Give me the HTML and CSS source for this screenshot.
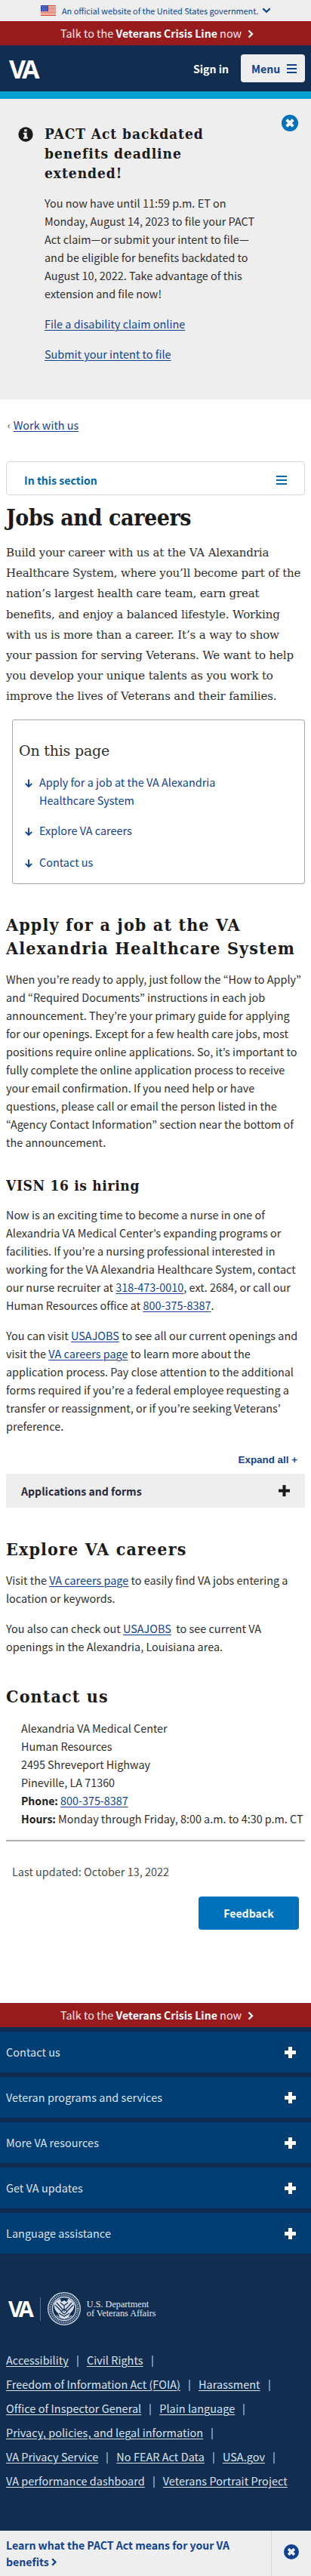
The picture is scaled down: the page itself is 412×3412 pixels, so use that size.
FILE: index.html
```html
<!DOCTYPE html>
<html lang="en">
<head>
<meta charset="utf-8">
<title>Jobs and careers | VA Alexandria Health Care</title>
<link rel="stylesheet" href="styles.css">
</head>
<body>
<div class="gov-banner">
  <svg class="flag" width="20" height="14" viewBox="0 0 20 14"><path fill="#fff" d="M0 0h20v14H0z"/><path stroke="#d9472f" stroke-width="1.1" d="M0 .6h20M0 2.8h20M0 4.9h20M0 7h20M0 9.1h20M0 11.2h20M0 13.4h20"/><path fill="#2a3fb0" d="M0 0h10v8H0z"/><path stroke="#cdd6ff" stroke-width=".8" stroke-dasharray="1 1.2" d="M1 1.6h8M2 3.4h7M1 5.2h8M2 6.8h7"/></svg>
  <span class="gov-text">An official website of the United States government.</span>
  <svg class="gov-chevron" width="12" height="8" viewBox="0 0 12 8"><path fill="none" stroke="#0f4291" stroke-width="2.2" d="M1.4 1.4 6 5.8l4.6-4.4"/></svg>
</div>
<div class="crisis"><span class="crisis-text">Talk to the <b>Veterans Crisis Line</b> now</span><svg width="8" height="12" viewBox="0 0 8 12"><path fill="none" stroke="#fff" stroke-width="2.3" d="m1.5 1.5 4.500 4.500-4.500 4.500"/></svg></div>
<header class="header">
  <span class="va-logo">VA</span>
  <a class="sign-in">Sign in</a>
  <button class="menu">Menu<svg width="13" height="12" viewBox="0 0 13 12"><path stroke="#0f4291" stroke-width="2" d="M0 1h13M0 6h13M0 11h13"/></svg></button>
</header>
<section class="alert">
  <svg class="info" width="20" height="20" viewBox="0 0 20 20"><circle cx="10" cy="10" r="9.700" fill="#1b1b1b"/><path fill="#eee" d="M8.200 3.300h3.400v2.900H8.200zM6.900 7.800h4.700v5.700h1.300v2.300H6.900v-2.300h1.300v-3.400H6.900z"/></svg>
  <div class="alert-body">
    <h2 class="alert-title">PACT Act backdated<br>benefits deadline<br>extended!</h2>
    <p>You now have until 11:59 p.m. ET on<br>Monday, August 14, 2023 to file your PACT<br>Act claim—or submit your intent to file—<br>and be eligible for benefits backdated to<br>August 10, 2022. Take advantage of this<br>extension and file now!</p>
    <p><a class="link">File a disability claim online</a></p>
    <p><a class="link">Submit your intent to file</a></p>
  </div>
  <svg class="close" width="22" height="22" viewBox="0 0 22 22"><circle cx="11" cy="11" r="11" fill="#0071bb"/><path stroke="#fff" stroke-width="4" d="m6.700 6.700 8.600 8.600m0-8.600-8.600 8.600"/></svg>
</section>
<nav class="crumb"><span class="crumb-mark">‹</span><a class="link">Work with us</a></nav>
<main class="main">
  <button class="section-nav">In this section<svg width="14" height="12" viewBox="0 0 14 12"><path stroke="#0068a8" stroke-width="1.800" d="M0 1h14M0 6h14M0 11h14"/></svg></button>
  <h1 class="title">Jobs and careers</h1>
  <p class="intro">Build your career with us at the VA Alexandria<br>Healthcare System, where you’ll become part of the<br>nation’s largest health care team, earn great<br>benefits, and enjoy a balanced lifestyle. Working<br>with us is more than a career. It’s a way to show<br>your passion for serving Veterans. We want to help<br>you develop your unique talents as you work to<br>improve the lives of Veterans and their families.</p>
  <nav class="toc">
    <h2 class="toc-title">On this page</h2>
    <a class="toc-link"><svg width="10" height="12" viewBox="0 0 10 12"><path fill="none" stroke="#0f4291" stroke-width="1.900" d="M5 .5v9.500M.800 5.800 5 10l4.200-4.200"/></svg><span>Apply for a job at the VA Alexandria<br>Healthcare System</span></a>
    <a class="toc-link"><svg width="10" height="12" viewBox="0 0 10 12"><path fill="none" stroke="#0f4291" stroke-width="1.900" d="M5 .5v9.500M.800 5.800 5 10l4.200-4.200"/></svg><span>Explore VA careers</span></a>
    <a class="toc-link"><svg width="10" height="12" viewBox="0 0 10 12"><path fill="none" stroke="#0f4291" stroke-width="1.900" d="M5 .5v9.500M.800 5.800 5 10l4.200-4.200"/></svg><span>Contact us</span></a>
  </nav>
  <h2 class="heading apply">Apply for a job at the VA<br>Alexandria Healthcare System</h2>
  <p>When you’re ready to apply, just follow the “How to Apply”<br>and “Required Documents” instructions in each job<br>announcement. They’re your primary guide for applying<br>for our openings. Except for a few health care jobs, most<br>positions require online applications. So, it’s important to<br>fully complete the online application process to receive<br>your email confirmation. If you need help or have<br>questions, please call or email the person listed in the<br>“Agency Contact Information” section near the bottom of<br>the announcement.</p>
  <h3 class="subheading">VISN 16 is hiring</h3>
  <p>Now is an exciting time to become a nurse in one of<br>Alexandria VA Medical Center’s expanding programs or<br>facilities. If you’re a nursing professional interested in<br>working for the VA Alexandria Healthcare System, contact<br>our nurse recruiter at <a class="link">318-473-0010</a>, ext. 2684, or call our<br>Human Resources office at <a class="link">800-375-8387</a>.</p>
  <p>You can visit <a class="link">USAJOBS</a> to see all our current openings and<br>visit the <a class="link">VA careers page</a> to learn more about the<br>application process. Pay close attention to the additional<br>forms required if you’re a federal employee requesting a<br>transfer or reassignment, or if you’re seeking Veterans’<br>preference.</p>
  <button class="expand">Expand all +</button>
  <button class="accordion">Applications and forms<svg width="15" height="15" viewBox="0 0 15 15"><path stroke="#1b1b1b" stroke-width="4" d="M7.500 0v15M0 7.500h15"/></svg></button>
  <h2 class="heading explore">Explore VA careers</h2>
  <p>Visit the <a class="link">VA careers page</a> to easily find VA jobs entering a<br>location or keywords.</p>
  <p>You also can check out <a class="link">USAJOBS</a>&nbsp; to see current VA<br>openings in the Alexandria, Louisiana area.</p>
  <h2 class="heading contact">Contact us</h2>
  <address class="address">Alexandria VA Medical Center<br>Human Resources<br>2495 Shreveport Highway<br>Pineville, LA 71360<br><b>Phone:</b> <a class="link">800-375-8387</a><br><b>Hours:</b> Monday through Friday, 8:00 a.m. to 4:30 p.m. CT</address>
  <hr class="rule">
  <p class="updated">Last updated: October 13, 2022</p>
  <button class="feedback">Feedback</button>
</main>
<div class="crisis"><span class="crisis-text">Talk to the <b>Veterans Crisis Line</b> now</span><svg width="8" height="12" viewBox="0 0 8 12"><path fill="none" stroke="#fff" stroke-width="2.3" d="m1.5 1.5 4.500 4.500-4.500 4.500"/></svg></div>
<footer class="footer">
  <div class="footer-nav">
    <button>Contact us<i class="plus"></i></button>
    <button>Veteran programs and services<i class="plus"></i></button>
    <button>More VA resources<i class="plus"></i></button>
    <button>Get VA updates<i class="plus"></i></button>
    <button>Language assistance<i class="plus"></i></button>
  </div>
  <div class="brand">
    <span class="va-logo small">VA</span><span class="brand-line"></span>
    <svg class="seal" width="44" height="44" viewBox="0 0 44 44" fill="none" stroke="#d5dde8"><circle cx="22" cy="22" r="21.300" stroke-width="1.300"/><circle cx="22" cy="22" r="18.300" stroke="#8fa0b8" stroke-width="3" stroke-dasharray="1.400 1"/><circle cx="22" cy="22" r="15.500" stroke-width="1.300"/><path fill="#d5dde8" stroke="none" d="M9 15c3-4 6-6 8-6l1 4 4-2 4 2 1-4c2 0 5 2 8 6 1 5-1 10-5 13l-2 5-6 3-6-3-2-5c-4-3-6-8-5-13z"/><path stroke="#112e51" stroke-width="1.200" d="m10 17 8 8m-6-11 8 9m14-6-8 8m6-11-8 9M17 14l5 4 5-4M22 18v8M15 28l7 4 7-4M18 26l4-4 4 4-4 3z"/><path stroke-width="1.200" d="M12 31c4 5 16 5 20 0"/></svg>
    <span class="brand-text">U.S. Department<br>of Veterans Affairs</span>
  </div>
  <div class="legal">
    <div><a>Accessibility</a><i></i><a>Civil Rights</a><i></i></div>
    <div><a>Freedom of Information Act (FOIA)</a><i></i><a>Harassment</a><i></i></div>
    <div><a>Office of Inspector General</a><i></i><a>Plain language</a><i></i></div>
    <div><a>Privacy, policies, and legal information</a><i></i></div>
    <div><a>VA Privacy Service</a><i></i><a>No FEAR Act Data</a><i></i><a>USA.gov</a><i></i></div>
    <div><a>VA performance dashboard</a><i></i><a>Veterans Portrait Project</a></div>
  </div>
</footer>
<aside class="promo">
  <a class="promo-link">Learn what the PACT Act means for your VA<br>benefits <svg width="7" height="11" viewBox="0 0 7 11"><path fill="none" stroke="#0f4291" stroke-width="2.300" d="m1.200 1.200 4.200 4.300-4.200 4.300"/></svg></a>
  <span class="promo-close"><svg width="20" height="20" viewBox="0 0 22 22"><circle cx="11" cy="11" r="11" fill="#0f4291"/><path stroke="#eee" stroke-width="4" d="m6.700 6.700 8.600 8.600m0-8.600-8.600 8.600"/></svg></span>
</aside>
</body>
</html>
```
FILE: styles.css
```css
* { box-sizing: border-box; }
body {
  margin: 0;
  background: #fff;
  color: #2e2e2e;
  font: 14.4px/24px "Noto Sans CJK KR", "Noto Sans", sans-serif;
  letter-spacing: .02px;
  white-space: nowrap;
}
p, h1, h2, h3 { margin: 0; }
p + p { margin-top: 16px; }
b { font-size: 14.05px; line-height: 1; }
button { border: 0; padding: 0; margin: 0; font: inherit; letter-spacing: inherit; text-align: left; }
.link { color: #0f4291; text-decoration: underline; text-underline-offset: 2px; text-decoration-thickness: 1px; }

.gov-banner { height: 28px; display: flex; align-items: center; padding-left: 54px; background: #eee; color: #0f4291; font-size: 10.850px; letter-spacing: 0; }
.gov-text { margin-left: 8px; }
.gov-chevron { margin-left: 5px; }
.crisis { height: 32px; display: flex; align-items: center; padding-left: 80px; background: #981b1e; color: #ffe9e9; }
.crisis b { color: #fff; }
.crisis svg { margin: 2px 0 0 8px; }
.header { height: 71px; display: flex; align-items: center; padding: 0 8px 0 12px; background: #112e51; border-bottom: 10px solid #00a0d0; }
.va-logo { font: bold 34px/36px "Open Sans", sans-serif; letter-spacing: -5px; color: #fff; }
.sign-in { margin-left: auto; color: #fff; font-weight: bold; font-size: 14.050px; }
.menu { display: flex; align-items: center; gap: 9px; width: 85px; height: 37px; margin-left: 16px; padding-left: 14px; border-radius: 4px; background: #eee; color: #0f4291; font-weight: bold; font-size: 14.050px; }

.alert { display: flex; align-items: flex-start; height: 398px; padding: 33px 17px 0 24px; background: #eee; }
.info { margin-top: 4px; }
.alert-body { margin-left: 15px; flex: 1; }
.alert-title, .subheading { font: bold 19px/26px "DejaVu Serif Condensed", "DejaVu Serif", serif; color: #1b1b1b; }
.alert-title { margin-bottom: 15px; letter-spacing: .95px; }
.close { margin-top: -12px; }

.crumb { display: flex; gap: 4px; height: 82px; padding: 22px 0 0 10px; }
.crumb-mark { font-size: 12px; }
.main { padding: 0 8px; }
.section-nav { display: flex; align-items: center; justify-content: space-between; width: 100%; height: 45px; padding: 4px 23px 0 23px; border: 1px solid #d6d7d9; border-radius: 4px; background: #fff; color: #0068a8; font-weight: bold; font-size: 14.050px; }
.title { margin-top: 10px; font: bold 30px/40px "DejaVu Serif Condensed", "DejaVu Serif", serif; letter-spacing: -.4px; color: #1b1b1b; }
.intro { margin-top: 13px; font: 15px/27.2px "DejaVu Serif", serif; letter-spacing: -.14px; }
.toc { height: 218px; margin: 16.4px 0 0 8px; padding: 26px 8px 0; border: 1px solid #a6a8ac; border-radius: 3px; }
.toc-title { margin-bottom: 16px; font: 19px/28px "DejaVu Serif", serif; letter-spacing: -.2px; }
.toc-link { display: flex; gap: 9px; margin: 0 0 16px 8px; color: #0f4291; }
.toc-link svg { margin-top: 8px; }
.toc-link + .toc-link { margin-bottom: 18px; }
.heading { font: bold 23px/31px "DejaVu Serif Condensed", "DejaVu Serif", serif; letter-spacing: 1.15px; color: #1b1b1b; }
.apply { margin: 38px 0 14px; }
.subheading { margin: 31.500px 0 14.500px; letter-spacing: .66px; }
.expand { display: block; margin: 20px 10px 5px auto; padding: 0; background: none; color: #0f4291; font: bold 13.333px/26px "Liberation Sans", sans-serif; }
.accordion { display: flex; align-items: center; justify-content: space-between; width: 100%; height: 45px; padding: 0 20px; background: #eee; color: #28283a; font-weight: bold; font-size: 14.050px; }
.explore { margin: 39px 0 14px; }
.contact { margin: 38px 0 15px; }
.address { margin-left: 20px; font-style: normal; font-size: 14.35px; letter-spacing: 0; }
.address b { color: #1b1b1b; }
.rule { height: 2px; margin: 16px 0 28px; border: 0; background: #aeb0b5; }
.updated { margin-left: 8px; color: #4a4a4a; }
.feedback { display: block; width: 133px; height: 44px; margin: 21px 8px 97px auto; border-radius: 4px; background: #0071bb; color: #fff; text-align: center; font-weight: bold; font-size: 14.050px; }

.footer { height: 667px; padding-top: 6px; background: #112e51; letter-spacing: .07px; }
.footer-nav { display: grid; gap: 6px; }
.footer-nav button { display: flex; align-items: center; justify-content: space-between; height: 54px; padding: 0 20px 0 8px; background: #003e73; color: #dce4ef; }
.plus { width: 15px; height: 15px; background: linear-gradient(#fff, #fff) center / 5px 15px no-repeat, linear-gradient(#fff, #fff) center / 15px 5px no-repeat; }
.brand { display: flex; align-items: center; height: 44px; margin: 51px 0 0 11px; }
.small { font-size: 29px; letter-spacing: -5px; }
.brand-line { width: 1px; height: 31px; margin: 0 9px 0 13px; background: #5b6f8a; }
.brand-text { margin-left: 8px; font: 12.2px/12px "Liberation Serif", serif; letter-spacing: 0; color: #e4e9f0; }
.legal { padding: 30px 8px 0; color: #dce4ef; line-height: 32px; }
.legal div { display: flex; align-items: center; }
.legal a { text-decoration: underline; text-underline-offset: 2px; text-decoration-thickness: 1px; }
.legal i { width: 2px; height: 15px; margin: 2px 11px 0; background: #6f8ba8; }
.promo { display: flex; height: 60px; background: #eee; color: #0f4291; }
.promo-link { width: 360px; padding: 8px 0 0 8px; border-right: 1px solid #d6d7d9; font-weight: bold; font-size: 14.050px; line-height: 22px; }
.promo-close { flex: 1; padding: 18px 0 0 16px; }
```
